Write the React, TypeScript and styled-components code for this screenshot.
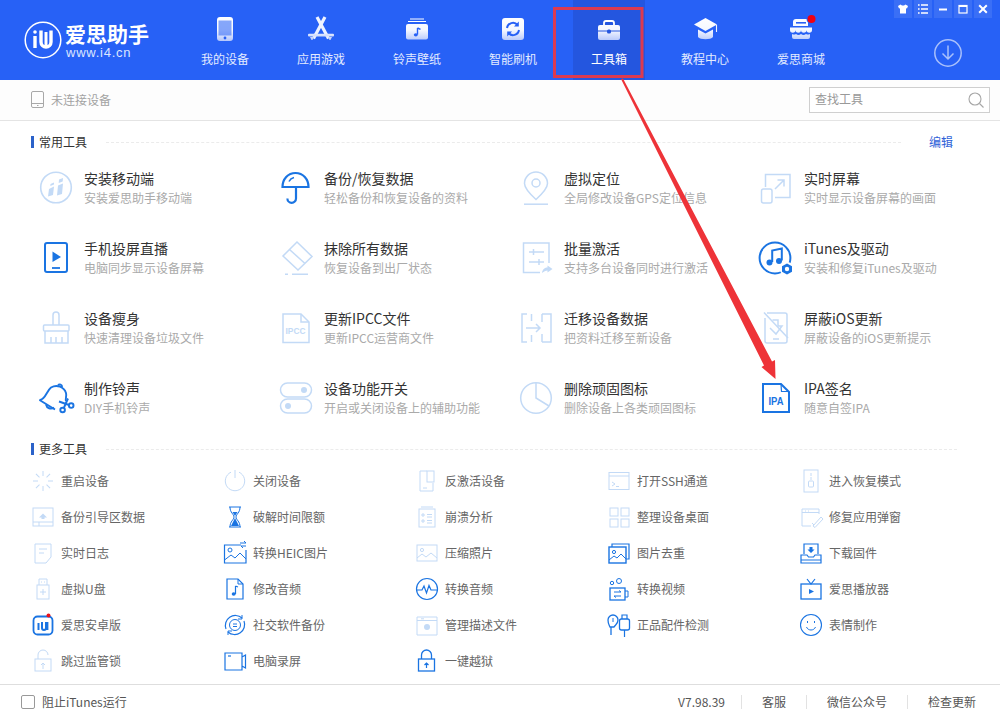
import React, { useId } from "react";
import styled, { createGlobalStyle } from "styled-components";

const Global = createGlobalStyle`
  html, body { margin: 0; padding: 0; background: #fff; }
  body { font-family: "Noto Sans CJK SC", "Liberation Sans", sans-serif; }
  * { box-sizing: border-box; }
`;

const LIGHT = "#c3daf6";
const DARK = "#1a74e2";

const Page = styled.div`
  position: relative;
  width: 1000px;
  height: 718px;
  overflow: hidden;
  display: flex;
  flex-direction: column;
  background: #fff;
`;
const Header = styled.header`
  position: relative;
  height: 80px;
  flex: none;
  display: flex;
  background: #2761f6;
  color: #fff;
`;
const Logo = styled.div`
  width: 177px;
  flex: none;
  display: flex;
  align-items: center;
  gap: 3px;
  padding-left: 24px;
`;
const LogoText = styled.div`
  display: flex;
  flex-direction: column;
`;
const LogoName = styled.span`
  font-size: 21px;
  line-height: 24px;
  font-weight: 700;
  white-space: nowrap;
`;
const LogoUrl = styled.span`
  font-family: "Liberation Sans", sans-serif;
  font-size: 13px;
  line-height: 15px;
  letter-spacing: 0.75px;
  color: #dbe5ff;
  margin-left: 1px;
`;
const Nav = styled.nav`
  display: flex;
`;
const NavItem = styled.div`
  width: 96px;
  height: 80px;
  display: flex;
  justify-content: center;
`;
const NavInner = styled.div<{ $active?: boolean }>`
  width: 72px;
  height: 80px;
  display: flex;
  flex-direction: column;
  align-items: center;
  padding-top: 10px;
  background: ${(p) => (p.$active ? "#2456df" : "transparent")};
`;
const NavLabel = styled.span<{ $active?: boolean }>`
  font-size: 12px;
  line-height: 18px;
  white-space: nowrap;
  color: ${(p) => (p.$active ? "#fff" : "#e3ebff")};
`;
const DownloadSlot = styled.div`
  flex: 1;
  display: flex;
  justify-content: flex-end;
  align-items: flex-start;
  padding: 38px 37px 0 0;
`;
const WinControls = styled.div`
  position: absolute;
  top: 0;
  right: 8px;
  display: flex;
  gap: 2px;
`;
const WinBtn = styled.div`
  width: 18px;
  height: 18px;
  background: rgba(255, 255, 255, 0.09);
  display: flex;
  align-items: center;
  justify-content: center;
`;

const Toolbar = styled.div`
  height: 40px;
  flex: none;
  display: flex;
  align-items: center;
  padding: 0 10px 0 29px;
  background: #fdfdfd;
`;
const DeviceText = styled.span`
  margin: -2px 0 0 4px;
  font-size: 12px;
  color: #a3a3a3;
`;
const Search = styled.div`
  margin-left: auto;
  width: 181px;
  height: 26px;
  border: 1px solid #cfcfcf;
  display: flex;
  align-items: center;
  justify-content: space-between;
  padding: 0 4px 0 5px;
  font-size: 12px;
  color: #999;
  background: #fff;
`;
const SearchLabel = styled.span`
  margin-top: -3px;
`;

const Main = styled.main`
  flex: 1;
  min-height: 0;
  border-top: 1px solid #e4e4e4;
`;
const SectionHead = styled.div<{ $top: number; $right: number }>`
  height: 20px;
  margin-top: ${(p) => p.$top}px;
  padding: 0 ${(p) => p.$right}px 0 31px;
  display: flex;
  align-items: center;
`;
const Bar = styled.i`
  width: 3px;
  height: 12px;
  background: #2b62c9;
  margin-right: 5px;
`;
const SectionTitle = styled.span`
  font-size: 12px;
  color: #333;
  white-space: nowrap;
  margin-top: -2px;
`;
const Dash = styled.span`
  flex: 1;
  margin-left: 19px;
  border-top: 1px dashed #ebebeb;
`;
const Edit = styled.span`
  margin: -2px 0 0 28px;
  font-size: 12px;
  color: #2f62d8;
  white-space: nowrap;
`;
const BigGrid = styled.div`
  display: grid;
  grid-template-columns: repeat(4, 240px);
  grid-auto-rows: 70px;
  padding-left: 38px;
`;
const BigTool = styled.div`
  display: flex;
  align-items: center;
  gap: 10px;
`;
const IconBox = styled.span<{ $dark?: boolean }>`
  display: flex;
  flex: none;
  color: ${(p) => (p.$dark ? DARK : LIGHT)};
  svg { display: block; overflow: visible; }
`;
const ToolText = styled.div`
  display: flex;
  flex-direction: column;
  margin-top: 1px;
`;
const ToolTitle = styled.span`
  font-size: 14px;
  line-height: 20px;
  color: #333;
  white-space: nowrap;
`;
const ToolSub = styled.span`
  margin-top: 1px;
  font-size: 12px;
  line-height: 18px;
  color: #aaa;
  white-space: nowrap;
`;
const SmallGrid = styled.div`
  margin-top: 4px;
  display: grid;
  grid-template-columns: repeat(5, 192px);
  grid-auto-rows: 36px;
  padding-left: 31px;
`;
const SmallTool = styled.div`
  display: flex;
  align-items: center;
  gap: 6px;
  font-size: 12px;
  color: #666;
  white-space: nowrap;
`;
const SmallLabel = styled.span`
  margin-top: -2px;
`;
const Footer = styled.footer`
  height: 34px;
  flex: none;
  border-top: 1px solid #dedede;
  display: flex;
  align-items: center;
  padding: 0 4px 0 21px;
  font-size: 12px;
  color: #555;
`;
const Check = styled.span`
  width: 14px;
  height: 14px;
  border: 1px solid #999;
  border-radius: 2px;
  margin-right: 7px;
`;
const Version = styled.span`
  margin-left: auto;
  padding-right: 16px;
`;
const FootLink = styled.span`
  padding: 0 20px;
  line-height: 14px;
  border-left: 1px solid #e2e2e2;
`;
const Overlay = styled.svg`
  position: absolute;
  inset: 0;
  pointer-events: none;
`;

const Big = ({ children }: { children: React.ReactNode }) => (
  <svg width="36" height="36" viewBox="0 0 36 36" fill="none" stroke="currentColor" strokeWidth="1.5">{children}</svg>
);
const Sm = ({ children }: { children: React.ReactNode }) => (
  <svg width="24" height="24" viewBox="0 0 24 24" fill="none" stroke="currentColor" strokeWidth="1">{children}</svg>
);
const F = { fill: "currentColor", stroke: "none" };

const NavSvg = ({ children }: { children: (g: string) => React.ReactNode }) => {
  const id = useId().replace(/[^a-zA-Z0-9]/g, "");
  return (
    <svg width="40" height="40" viewBox="0 0 40 40" fill="none">
      <defs>
        <linearGradient id={id} gradientUnits="userSpaceOnUse" x1="0" y1="7" x2="0" y2="31">
          <stop offset="0" stopColor="#ffffff" />
          <stop offset="0.55" stopColor="#f4f7ff" />
          <stop offset="1" stopColor="#b4c6fb" />
        </linearGradient>
      </defs>
      {children(`url(#${id})`)}
    </svg>
  );
};
const B = "#2761f6";
const navs: { label: string; active?: boolean; icon: React.ReactNode }[] = [
  { label: "我的设备", icon: <NavSvg>{(g) => <>
    <rect x="12" y="7" width="16" height="24" rx="3" fill={g} />
    <rect x="13.5" y="10.5" width="13" height="15" fill={B} opacity="0.55" />
    <circle cx="20" cy="28" r="1.4" fill={B} />
  </>}</NavSvg> },
  { label: "应用游戏", icon: <NavSvg>{(g) => <>
    <path d="M16 7 L27.5 28.5" stroke="#eef3ff" strokeWidth="3.2" />
    <path d="M24 7 L12.5 28.5" stroke="#eef3ff" strokeWidth="3.2" />
    <rect x="7" y="23.8" width="26" height="2.6" rx="1" fill={g} />
    <path d="M9 27 H13 L11.5 30 H10.5 Z M27 27 H31 L29.5 30 H28.5 Z" fill={g} />
  </>}</NavSvg> },
  { label: "铃声壁纸", icon: <NavSvg>{(g) => <>
    <path d="M13 9 H27 M11 11.5 H29" stroke="#fff" strokeWidth="1" />
    <rect x="9" y="14" width="22" height="15.5" rx="2" fill={g} />
    <path d="M20.5 18 V24.5" stroke={B} strokeWidth="1.4" />
    <path d="M20.5 18 L23.5 19.4" stroke={B} strokeWidth="1.4" />
    <ellipse cx="18.8" cy="24.8" rx="2" ry="1.6" fill={B} />
  </>}</NavSvg> },
  { label: "智能刷机", icon: <NavSvg>{(g) => <>
    <rect x="9" y="8" width="22" height="22" rx="3" fill={g} />
    <path d="M14 18 a6 6 0 0 1 10.5 -3 M26 20 a6 6 0 0 1 -10.5 3" stroke={B} strokeWidth="2" />
    <path d="M25.8 11.5 V16.5 H21 M14.2 26.5 V21.5 H19" fill={B} />
  </>}</NavSvg> },
  { label: "工具箱", active: true, icon: <NavSvg>{(g) => <>
    <path d="M15 15 V13 a2 2 0 0 1 2 -2 h6 a2 2 0 0 1 2 2 v2" stroke="#fff" strokeWidth="1.8" />
    <rect x="9" y="15" width="22" height="15" rx="2" fill={g} />
    <path d="M9 21 H31" stroke="#2456df" strokeWidth="1" />
    <rect x="18" y="19.5" width="4" height="4" rx="1.5" fill="#2456df" />
  </>}</NavSvg> },
  { label: "教程中心", icon: <NavSvg>{(g) => <>
    <path d="M20.5 8 L32 14.5 L20.5 21 L9 14.5 Z" fill={g} />
    <path d="M13 19.5 L20.5 23.5 L28 19.5 V27 C26 30 15 30 13 27 Z" fill={g} />
    <path d="M31.5 15 V22" stroke="#eef2ff" strokeWidth="1.1" />
  </>}</NavSvg> },
  { label: "爱思商城", icon: <NavSvg>{(g) => <>
    <path d="M12 16 V12 a3 3 0 0 1 3 -3 H27 V16 Z" fill={g} />
    <rect x="15" y="12" width="10" height="1.6" fill={B} />
    <path d="M9 17.5 H31 V20 a2.7 2.7 0 0 1 -5.5 0 a2.7 2.7 0 0 1 -5.5 0 a2.7 2.7 0 0 1 -5.5 0 a2.7 2.7 0 0 1 -5.5 0 Z" fill={g} />
    <path d="M11 24 a4 4 0 0 0 4 0 a4 4 0 0 0 5 0 a4 4 0 0 0 5 0 a4 4 0 0 0 4 0 V27 a2 2 0 0 1 -2 2 H13 a2 2 0 0 1 -2 -2 Z" fill={g} />
    <circle cx="30.5" cy="9" r="5" fill={B} />
    <circle cx="30.5" cy="9" r="4" fill="#f00010" />
  </>}</NavSvg> },
];

const bigTools: { t: string; s: string; d?: boolean; i: React.ReactNode }[] = [
  { t: "安装移动端", s: "安装爱思助手移动端", i: <Big>
    <circle cx="18" cy="18.5" r="15.3" strokeWidth="1.6" />
    <path d="M11 20 L16 17.5 L15 26 L10 27.5 Z M20 16.5 L25 14.5 L24 25 L19 26.5 Z M21 10.5 L25 9 L24.7 12.5 L20.7 14 Z M12.5 15 L16 13.5 L16 15.5 L12.3 17 Z" {...F} />
  </Big> },
  { t: "备份/恢复数据", s: "轻松备份和恢复设备的资料", d: true, i: <Big>
    <path d="M4.5 18 C4.5 10 10 4 17.5 4 S30.5 10 30.5 18 Z" strokeWidth="2.2" />
    <path d="M18 18 V29.5 a4.3 4.3 0 0 1 -8.6 0" strokeWidth="2.2" />
    <path d="M11 12.5 a7.5 7.5 0 0 1 5 -4" strokeWidth="1.6" />
  </Big> },
  { t: "虚拟定位", s: "全局修改设备GPS定位信息", i: <Big>
    <path d="M18 30.5 C12 25 6.5 19 6.5 14.5 a11.5 11.5 0 0 1 23 0 C29.5 19 24 25 18 30.5 Z" />
    <circle cx="18" cy="14" r="4" />
    <path d="M6 35.2 H30" />
  </Big> },
  { t: "实时屏幕", s: "实时显示设备屏幕的画面", i: <Big>
    <path d="M7.5 18 V5.5 H32 V28.5 H17" />
    <rect x="3.5" y="20" width="10.5" height="14" rx="2" />
    <path d="M17 20 L25.5 11.5 M19.5 11 H26 V17.5" />
  </Big> },
  { t: "手机投屏直播", s: "电脑同步显示设备屏幕", d: true, i: <Big>
    <rect x="7" y="4" width="22" height="29" rx="2" strokeWidth="2" />
    <path d="M14.5 12.5 L23 18 L14.5 23 Z" {...F} />
    <path d="M14 29 H22" strokeWidth="1.8" />
  </Big> },
  { t: "抹除所有数据", s: "恢复设备到出厂状态", i: <Big>
    <path d="M19 3 L34 17.5 L20 31 L5 17 Z" />
    <path d="M11.5 10.5 L27 24.5" />
    <path d="M7 35.2 H10 M14 35.2 H30" />
  </Big> },
  { t: "批量激活", s: "支持多台设备同时进行激活", i: <Big>
    <path d="M31 24 V4 H5.5 V33.5 H22" />
    <path d="M11 13 H26 M15.5 10 V16 M11 23 H26 M21 20 V26" />
    <path d="M24 34 C24.5 30 27 28.5 29.5 28.5 V26.5 L34.5 30 L29.5 33.5 V31.5 C27.5 31.5 26 32.5 24 34 Z" {...F} />
  </Big> },
  { t: "iTunes及驱动", s: "安装和修复iTunes及驱动", d: true, i: <Big>
    <circle cx="17" cy="19" r="15.4" strokeWidth="2" />
    <path d="M14.2 23 V11.5 L23.8 9.5 V21.5" strokeWidth="2" />
    <circle cx="11.5" cy="23.5" r="3" {...F} />
    <circle cx="21" cy="22" r="3" {...F} />
    <circle cx="29" cy="30" r="7" fill="#fff" stroke="none" />
    <path d="M29 24.5 L34 27.3 V32.7 L29 35.5 L24 32.7 V27.3 Z" {...F} />
    <circle cx="29" cy="30" r="2.2" fill="#fff" stroke="none" />
  </Big> },
  { t: "设备瘦身", s: "快速清理设备垃圾文件", i: <Big>
    <path d="M15 16 V6 a3 3 0 0 1 6 0 V16" />
    <rect x="5.5" y="16" width="25.5" height="6" rx="1" />
    <path d="M7 22 V34 H30 V22" />
    <path d="M13 34 V28 M18 34 V28 M24 34 V28" />
  </Big> },
  { t: "更新IPCC文件", s: "更新IPCC运营商文件", i: <Big>
    <path d="M5 5 H23 L31 13 V33.5 H5 Z" />
    <path d="M23 5 V13 H31" />
    <text x="7.5" y="25" fontFamily="Liberation Sans, sans-serif" fontSize="8.5" fontWeight="700" fill="currentColor" stroke="none" textLength="20" lengthAdjust="spacingAndGlyphs">IPCC</text>
  </Big> },
  { t: "迁移设备数据", s: "把资料迁移至新设备", i: <Big>
    <path d="M9 5 H4 V33 H9 M13.5 5 V12 M13.5 26 V33" />
    <path d="M8 19 H22 M18 15 L22 19 L18 23" />
    <path d="M24 5 V13 M24 25 V33 M24 5 H33 V33 H24" />
  </Big> },
  { t: "屏蔽iOS更新", s: "屏蔽设备的iOS更新提示", i: <Big>
    <path d="M9 4 H27 a2 2 0 0 1 2 2 V32 a2 2 0 0 1 -2 2 H9 a2 2 0 0 1 -2 -2 V9" />
    <path d="M6 3.5 L30 29" />
    <path d="M14.5 11 H20 V17 H24 L18 25 L12 19" />
    <path d="M15 30 H21" />
  </Big> },
  { t: "制作铃声", s: "DIY手机铃声", d: true, i: <Big>
    <path d="M1.5 21 C7.5 21 8 12.5 13 8.5 C19 5 26 8 28 14 C29 18 27 20 28 22" strokeWidth="1.9" />
    <path d="M1.5 21 L17 30.5" strokeWidth="1.9" />
    <path d="M8 25.5 a5 5 0 0 0 8 3" strokeWidth="1.9" />
    <path d="M20 6.5 a2.2 2.2 0 0 1 4 1.5" strokeWidth="1.9" />
    <circle cx="24.6" cy="31" r="2.3" strokeWidth="1.9" />
    <circle cx="33.2" cy="26.6" r="2.3" strokeWidth="1.9" />
    <path d="M25.8 29 L30 19.5 M31 26 L21 22.5" strokeWidth="1.9" />
  </Big> },
  { t: "设备功能开关", s: "开启或关闭设备上的辅助功能", i: <Big>
    <rect x="2.5" y="4" width="31" height="14" rx="7" />
    <circle cx="26" cy="11" r="3" {...F} />
    <rect x="2.5" y="20" width="31" height="14" rx="7" />
    <circle cx="10" cy="27" r="3" {...F} />
  </Big> },
  { t: "删除顽固图标", s: "删除设备上各类顽固图标", i: <Big>
    <circle cx="18" cy="19" r="15.3" />
    <path d="M18 4 V19 L31 27" />
  </Big> },
  { t: "IPA签名", s: "随意自签IPA", d: true, i: <Big>
    <path d="M5 5 H23 L31 13 V33 H5 Z" strokeWidth="2" />
    <path d="M23 5 L23.5 12.5 H31" strokeWidth="1.2" />
    <text x="10.5" y="26" fontFamily="Liberation Sans, sans-serif" fontSize="10" fontWeight="700" fill="currentColor" stroke="none" textLength="15" lengthAdjust="spacingAndGlyphs">IPA</text>
  </Big> },
];

const ticks = [0, 45, 90, 135, 180, 225, 270, 315];
const smallTools: { t: string; d?: boolean; i: React.ReactNode }[] = [
  { t: "重启设备", i: <Sm>{ticks.map((a) => <path key={a} d="M12 2 V7" transform={`rotate(${a} 12 12)`} />)}</Sm> },
  { t: "关闭设备", i: <Sm><path d="M8 3.2 A9.7 9.7 0 1 0 16 3.2" /><path d="M12 1 V9" /></Sm> },
  { t: "反激活设备", i: <Sm><path d="M12 2 H5 V22 H18 V14" /><rect x="12" y="2" width="7" height="11" /><path d="M8 19 H12" /></Sm> },
  { t: "打开SSH通道", i: <Sm><rect x="2" y="3.5" width="20" height="17" /><path d="M2 7 H22 M5 13 L8 15 L5 17 M9 17.5 H12" /></Sm> },
  { t: "进入恢复模式", i: <Sm><rect x="5" y="1" width="14" height="22" /><path d="M12 4 V7 M12 8 V11" /><rect x="9.5" y="12" width="5" height="6" rx="1" /></Sm> },
  { t: "备份引导区数据", i: <Sm><rect x="2" y="3" width="20" height="18" /><path d="M2 17 H22 M8 21 V17" /><path d="M8 12.5 L12 8.5 L16 12.5 H13.5 V14 H10.5 V12.5 Z" {...F} /></Sm> },
  { t: "破解时间限额", d: true, i: <Sm><path d="M6 2 H18 M6 22 H18 M7 2 C7 8 11 9 11 12 C11 15 7 16 7 22 M17 2 C17 8 13 9 13 12 C13 15 17 16 17 22" /><path d="M12 13 L16 21 H8 Z M9.5 7 H14.5 L12 11 Z" {...F} /></Sm> },
  { t: "崩溃分析", i: <Sm><rect x="4" y="4" width="16" height="18" /><path d="M6 2 H18 M7 9 H9 V11 H7 Z M7 15 H9 V17 H7 Z M12 9.5 H17 M12 12 H17 M12 15.5 H17 M12 18 H17" /></Sm> },
  { t: "整理设备桌面", i: <Sm><rect x="3" y="3" width="8" height="8" /><rect x="14" y="3" width="8" height="8" /><rect x="3" y="14" width="8" height="8" /><rect x="14" y="14" width="8" height="8" /></Sm> },
  { t: "修复应用弹窗", i: <Sm><path d="M20 9 V4 H3 V21 H12" /><path d="M3 7.5 H20 M6 6 H7 M9 6 H10" /><path d="M14 21 L22 12 L24 14 L16 22.5 Z M13 18 L15 20" /></Sm> },
  { t: "实时日志", i: <Sm><path d="M4 3 H20 V16 L15 22 H4 Z" /><path d="M8 8 H16 M8 12 H13" /></Sm> },
  { t: "转换HEIC图片", d: true, i: <Sm><path d="M18 4 H1.5 V22 H23 V9" strokeWidth="1.2" /><circle cx="7" cy="9" r="2" /><path d="M1.5 19 L8 14 L12 17 L17 12 L23 18" /><path d="M17 2 H23 M21 0 L23 2 M23 5 H18 M20 7 L18 5" /></Sm> },
  { t: "压缩照片", i: <Sm><rect x="2" y="4" width="20" height="16" /><circle cx="7" cy="9" r="1.6" /><path d="M2 17 L7 13 L11 16 L16 12 L22 17" /></Sm> },
  { t: "图片去重", d: true, i: <Sm><path d="M5 6 V3 H22 V18 H19" strokeWidth="1.2" /><rect x="2" y="6" width="17" height="16" strokeWidth="1.4" /><circle cx="7" cy="11" r="1.6" /><path d="M2 19 L7 15 L10 17 L14 13 L19 18" /></Sm> },
  { t: "下载固件", d: true, i: <Sm><path d="M5 13 V3 H19 V13" strokeWidth="1.2" /><path d="M2 14 H8 L9.5 16 H14.5 L16 14 H22 V22 H2 Z M2 19 H22" strokeWidth="1.2" /><path d="M12 5 L15.5 8.5 H13.5 V11 H10.5 V8.5 H8.5 Z" transform="rotate(180 12 8.5)" {...F} /></Sm> },
  { t: "虚拟U盘", i: <Sm><path d="M8 8 V2 H16 V8 M10 5 H11 M13 5 H14" /><rect x="6" y="8" width="12" height="14" /><path d="M12 12 V18 M9 15 H15" /></Sm> },
  { t: "修改音频", d: true, i: <Sm><path d="M15 2 H4 V22 H20 V7 Z" strokeWidth="1.2" /><path d="M15 2 V7 H20" /><path d="M12.5 9 V17 M12.5 9 L15 10" strokeWidth="1.2" /><ellipse cx="10.7" cy="17" rx="2" ry="1.8" {...F} /></Sm> },
  { t: "转换音频", d: true, i: <Sm><circle cx="12" cy="12" r="10.5" strokeWidth="1.2" /><path d="M1.5 13 H7 L9 9 L11.5 16 L14 8.5 L16 13 H22.5" strokeWidth="1.2" /></Sm> },
  { t: "转换视频", d: true, i: <Sm><rect x="3" y="11" width="15" height="12" strokeWidth="1.3" /><path d="M18 14 H21 V20 H18" /><circle cx="5" cy="6" r="1.7" /><circle cx="12" cy="4" r="2.5" /><path d="M7 15 H14 L12 13.5 M14 19 H7 L9 20.5" /></Sm> },
  { t: "爱思播放器", d: true, i: <Sm><rect x="2" y="7" width="20" height="15" strokeWidth="1.3" /><path d="M8 2 L12 7 L16 2" strokeWidth="1.2" /><path d="M10 12 L15 14.5 L10 17 Z" {...F} /></Sm> },
  { t: "爱思安卓版", d: true, i: <Sm>
    <rect x="2.5" y="3.5" width="19" height="18" rx="4" strokeWidth="1.8" />
    <path d="M7.5 10 V17 M11 9 V15 a2 2 0 0 0 4 0 V9 M15 9 V17" strokeWidth="2" />
    <path d="M16.5 9 V17" strokeWidth="1.8" />
    <circle cx="17.5" cy="2.5" r="2" fill="#e8101c" stroke="none" />
  </Sm> },
  { t: "社交软件备份", d: true, i: <Sm><path d="M3 16 A10 10 0 0 1 19 5 M21 8 A10 10 0 0 1 5 19" strokeWidth="1.2" /><path d="M19 2 V6 H15 M5 22 V18 H9" /><circle cx="12" cy="12" r="5.5" /><path d="M10 11 H14 M10 13.5 H14" /></Sm> },
  { t: "管理描述文件", i: <Sm><path d="M2 4 H22 V22 H2 Z" /><path d="M2 7.5 H22 M6 5.8 H9" /><circle cx="12" cy="14" r="3" {...F} /></Sm> },
  { t: "正品配件检测", d: true, i: <Sm><path d="M4 22 V14 M1 7 a5 5 0 0 1 10 0 C11 11 8 12 7 14 H3 C2 12 1 11 1 7 Z" strokeWidth="1.3" /><path d="M6 5 V9" /><rect x="12.5" y="6" width="10" height="11" rx="2" strokeWidth="1.3" /><path d="M15 6 V2 H20 V6 M17.5 17 V24" strokeWidth="1.2" /></Sm> },
  { t: "表情制作", d: true, i: <Sm><circle cx="12" cy="12" r="10.5" strokeWidth="1.1" /><path d="M7.5 14 C9 18 15 18 16.5 14 M8.5 8 V10 M15.5 8 V10" /></Sm> },
  { t: "跳过监管锁", i: <Sm><rect x="4" y="10" width="16" height="12" /><path d="M7 10 V6 a5 5 0 0 1 10 0" /><path d="M12 20 V14 M10 16 L12 14 L14 16" /></Sm> },
  { t: "电脑录屏", d: true, i: <Sm><path d="M2 4 H19 V21 H2 Z M19 8 L22.5 6 V19 L19 17" strokeWidth="1.2" /><path d="M5 7 H8" strokeWidth="1.2" /></Sm> },
  { t: "一键越狱", d: true, i: <Sm><rect x="3.5" y="10" width="16" height="12" strokeWidth="1.3" /><path d="M6.5 10 V6 a5 5 0 0 1 10 0 V10" strokeWidth="1.3" /><path d="M11.5 19 V14 M9.5 16 L11.5 14 L13.5 16" strokeWidth="1.2" /></Sm> },
];

export default function App() {
  return (
    <Page>
      <Global />
      <Header>
        <Logo>
          <svg width="38" height="38" viewBox="0 0 38 38" fill="none" stroke="#fff">
            <circle cx="19" cy="19" r="17.8" strokeWidth="1.5" />
            <circle cx="11" cy="11" r="1.8" fill="#fff" stroke="none" />
            <path d="M11 15 V27" strokeWidth="3.4" />
            <path d="M17 9.5 V21 a5 5 0 0 0 10 0 V9.5" strokeWidth="3.4" />
            <path d="M22 11 V25" strokeWidth="3" />
          </svg>
          <LogoText>
            <LogoName>爱思助手</LogoName>
            <LogoUrl>www.i4.cn</LogoUrl>
          </LogoText>
        </Logo>
        <Nav>
          {navs.map((n) => (
            <NavItem key={n.label}>
              <NavInner $active={n.active}>
                {n.icon}
                <NavLabel $active={n.active}>{n.label}</NavLabel>
              </NavInner>
            </NavItem>
          ))}
        </Nav>
        <DownloadSlot>
          <svg width="30" height="30" viewBox="0 0 30 30" fill="none" stroke="#a9c0fb" strokeWidth="1.5">
            <circle cx="15" cy="15" r="13.2" />
            <path d="M15 7.5 V21 M9.5 15.5 L15 21 L20.5 15.5" />
          </svg>
        </DownloadSlot>
        <WinControls>
          <WinBtn><svg width="12" height="12" viewBox="0 0 12 12" fill="#fff"><path d="M3.5 1.5 L5 2.5 H7 L8.5 1.5 L11 3 L10 5.5 L9 5.2 V10.5 H3 V5.2 L2 5.5 L1 3 Z" /></svg></WinBtn>
          <WinBtn><svg width="12" height="12" viewBox="0 0 12 12" fill="none" stroke="#fff" strokeWidth="1.5"><path d="M1 2 H2.6 M4 2 H11 M1 6 H2.6 M4 6 H11 M1 10 H2.6 M4 10 H11" /></svg></WinBtn>
          <WinBtn><svg width="12" height="12" viewBox="0 0 12 12" stroke="#fff" strokeWidth="2"><path d="M2 6.5 H10" /></svg></WinBtn>
          <WinBtn><svg width="12" height="12" viewBox="0 0 12 12" fill="none" stroke="#fff"><rect x="2" y="2.5" width="8" height="7.5" strokeWidth="1.2" /><path d="M2 3 H10" strokeWidth="2" /></svg></WinBtn>
          <WinBtn><svg width="12" height="12" viewBox="0 0 12 12" stroke="#fff" strokeWidth="2"><path d="M2.2 2.2 L9.8 9.8 M9.8 2.2 L2.2 9.8" /></svg></WinBtn>
        </WinControls>
      </Header>

      <Toolbar>
        <svg width="18" height="20" viewBox="0 0 18 20" fill="none" stroke="#a8a8a8"><rect x="2.5" y="1.5" width="12" height="16" rx="1.5" /><path d="M2.5 13.5 H14.5" /><path d="M8 15.5 H9.5" /></svg>
        <DeviceText>未连接设备</DeviceText>
        <Search>
          <SearchLabel>查找工具</SearchLabel>
          <svg width="18" height="18" viewBox="0 0 18 18" fill="none" stroke="#a6a6a6" strokeWidth="1.1"><circle cx="8" cy="8" r="6" /><path d="M12.5 12.5 L16.5 16.5" /></svg>
        </Search>
      </Toolbar>

      <Main>
        <SectionHead $top={11} $right={47}>
          <Bar />
          <SectionTitle>常用工具</SectionTitle>
          <Dash />
          <Edit>编辑</Edit>
        </SectionHead>
        <BigGrid>
          {bigTools.map((b) => (
            <BigTool key={b.t}>
              <IconBox $dark={b.d}>{b.i}</IconBox>
              <ToolText>
                <ToolTitle>{b.t}</ToolTitle>
                <ToolSub>{b.s}</ToolSub>
              </ToolText>
            </BigTool>
          ))}
        </BigGrid>
        <SectionHead $top={7} $right={43}>
          <Bar />
          <SectionTitle>更多工具</SectionTitle>
          <Dash />
        </SectionHead>
        <SmallGrid>
          {smallTools.map((s) => (
            <SmallTool key={s.t}>
              <IconBox $dark={s.d}>{s.i}</IconBox>
              <SmallLabel>{s.t}</SmallLabel>
            </SmallTool>
          ))}
        </SmallGrid>
      </Main>

      <Footer>
        <Check />
        阻止iTunes运行
        <Version>V7.98.39</Version>
        <FootLink>客服</FootLink>
        <FootLink>微信公众号</FootLink>
        <FootLink>检查更新</FootLink>
      </Footer>

      <Overlay width="1000" height="718" viewBox="0 0 1000 718" fill="none">
        <rect x="554.5" y="8.5" width="87.5" height="68" stroke="#dc3a50" strokeWidth="3" />
        <path d="M621 79 L623 78.5 L772 361.5 L775 360 L775.5 379 L761.5 367 L764 365.5 Z" fill="#ee3338" />
      </Overlay>
    </Page>
  );
}
